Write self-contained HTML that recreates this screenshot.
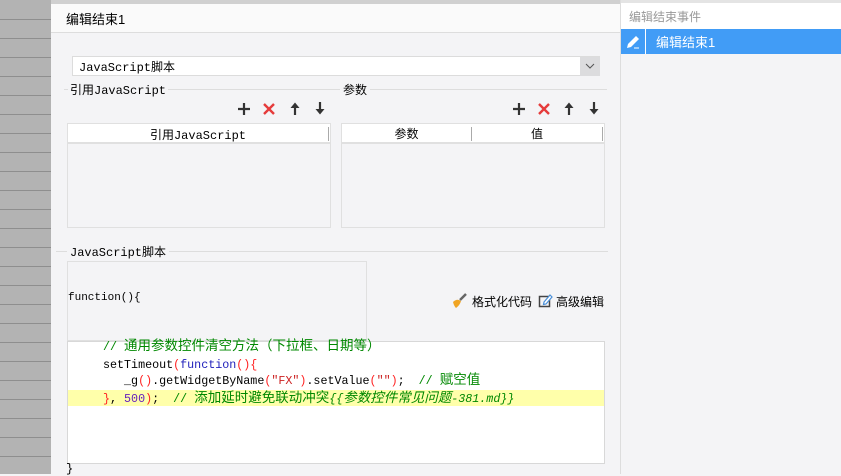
<!DOCTYPE html>
<html><head><meta charset="utf-8"><style>
*{margin:0;padding:0;box-sizing:border-box}
body{width:841px;height:474px;overflow:hidden;position:relative;background:#f4f4f6;font-family:"Liberation Sans","Noto Sans CJK SC",sans-serif;font-size:12px;color:#000}
.a{position:absolute}
.mono{font-family:"Liberation Mono","Noto Sans CJK SC",monospace}
.gl{position:absolute;left:0;width:51px;height:1px;background:#8e8e8e}
.cj{font-size:13.5px}
</style></head><body>
<div class="a" style="left:0;top:0;width:51px;height:474px;background:#b3b3b3"></div>
<div class="gl" style="top:19px"></div><div class="gl" style="top:38px"></div><div class="gl" style="top:57px"></div><div class="gl" style="top:76px"></div><div class="gl" style="top:95px"></div><div class="gl" style="top:114px"></div><div class="gl" style="top:133px"></div><div class="gl" style="top:152px"></div><div class="gl" style="top:171px"></div><div class="gl" style="top:190px"></div><div class="gl" style="top:209px"></div><div class="gl" style="top:228px"></div><div class="gl" style="top:247px"></div><div class="gl" style="top:266px"></div><div class="gl" style="top:285px"></div><div class="gl" style="top:304px"></div><div class="gl" style="top:323px"></div><div class="gl" style="top:342px"></div><div class="gl" style="top:361px"></div><div class="gl" style="top:380px"></div><div class="gl" style="top:399px"></div><div class="gl" style="top:418px"></div><div class="gl" style="top:437px"></div><div class="gl" style="top:456px"></div>
<div class="a" style="left:51px;top:0;width:570px;height:4px;background:#d0d0d0"></div>
<div class="a" style="left:51px;top:4px;width:569px;height:29px;background:#fafafa;border-bottom:1px solid #ddd"></div>
<div class="a" style="left:66px;top:9px;font-size:13px">编辑结束1</div>
<div class="a" style="left:72px;top:56px;width:528px;height:20px;background:#fff;border:1px solid #dcdcdc"></div>
<div class="a" style="left:580px;top:57px;width:20px;height:19px;background:#dcdcde"></div>
<svg class="a" style="left:585px;top:62px" width="10" height="8"><path d="M1 2 L5 6 L9 2" stroke="#555" fill="none"/></svg>
<div class="a mono" style="left:79px;top:58px">JavaScript脚本</div>
<div class="a" style="left:64px;top:89px;width:270px;height:1px;background:#ddd"></div>
<div class="a mono" style="left:68px;top:81px;background:#f4f4f6;padding:0 2px">引用JavaScript</div>
<div class="a" style="left:334px;top:89px;width:273px;height:1px;background:#ddd"></div>
<div class="a" style="left:340px;top:81px;background:#f4f4f6;padding:0 3px">参数</div>
<svg class="a" style="left:237px;top:102px" width="14" height="14"><path d="M7 1V13M1 7H13" stroke="#333" stroke-width="2.2"/></svg>
<svg class="a" style="left:262px;top:102px" width="14" height="14"><path d="M2 2L12 12M12 2L2 12" stroke="#e53b3b" stroke-width="2.4"/></svg>
<svg class="a" style="left:289px;top:101px" width="12" height="15"><path d="M6 14V3" stroke="#333" stroke-width="2.2"/><path d="M1.5 7 L6 1.5 L10.5 7Z" fill="#333"/></svg>
<svg class="a" style="left:314px;top:101px" width="12" height="15"><path d="M6 1V12" stroke="#333" stroke-width="2.2"/><path d="M1.5 8 L6 13.5 L10.5 8Z" fill="#333"/></svg>
<svg class="a" style="left:512px;top:102px" width="14" height="14"><path d="M7 1V13M1 7H13" stroke="#333" stroke-width="2.2"/></svg>
<svg class="a" style="left:537px;top:102px" width="14" height="14"><path d="M2 2L12 12M12 2L2 12" stroke="#e53b3b" stroke-width="2.4"/></svg>
<svg class="a" style="left:563px;top:101px" width="12" height="15"><path d="M6 14V3" stroke="#333" stroke-width="2.2"/><path d="M1.5 7 L6 1.5 L10.5 7Z" fill="#333"/></svg>
<svg class="a" style="left:588px;top:101px" width="12" height="15"><path d="M6 1V12" stroke="#333" stroke-width="2.2"/><path d="M1.5 8 L6 13.5 L10.5 8Z" fill="#333"/></svg>
<div class="a" style="left:67px;top:123px;width:264px;height:105px;border:1px solid #e0e0e0;background:#f4f4f6"></div>
<div class="a" style="left:68px;top:124px;width:262px;height:20px;background:#fff;border-bottom:2px solid #e0e0e0"></div>
<div class="a" style="left:328px;top:127px;width:1px;height:14px;background:#aaa"></div>
<div class="a mono" style="left:68px;top:126px;width:260px;text-align:center">引用JavaScript</div>
<div class="a" style="left:341px;top:123px;width:264px;height:105px;border:1px solid #e0e0e0;background:#f4f4f6"></div>
<div class="a" style="left:342px;top:124px;width:262px;height:20px;background:#fff;border-bottom:2px solid #e0e0e0"></div>
<div class="a" style="left:471px;top:127px;width:1px;height:14px;background:#aaa"></div>
<div class="a" style="left:602px;top:127px;width:1px;height:14px;background:#aaa"></div>
<div class="a" style="left:342px;top:125px;width:129px;text-align:center">参数</div>
<div class="a" style="left:472px;top:125px;width:130px;text-align:center">值</div>
<div class="a" style="left:56px;top:251px;width:552px;height:1px;background:#ddd"></div>
<div class="a mono" style="left:67px;top:243px;background:#f4f4f6;padding:0 3px">JavaScript脚本</div>
<div class="a" style="left:67px;top:261px;width:300px;height:80px;border:1px solid #e0e0e0"></div>
<div class="a mono" style="left:68px;top:292px;font-size:11px">function(){</div>
<svg class="a" style="left:451px;top:293px" width="17" height="16"><path d="M15 1 L9 7" stroke="#666" stroke-width="2.5"/><path d="M2 9 Q6 5 10 8 Q9 12 5 15 Q3 13 2 9Z" fill="#f0a524"/></svg>
<div class="a" style="left:472px;top:293px;font-size:12px">格式化代码</div>
<svg class="a" style="left:538px;top:293px" width="15" height="15"><rect x="1.5" y="3.5" width="10" height="10" fill="none" stroke="#444" stroke-width="1.5"/><path d="M6 9 L12 2 L14 4 L8 11 L5.5 11.5Z" fill="#fff" stroke="#4a8fd8" stroke-width="1.2"/></svg>
<div class="a" style="left:556px;top:293px;font-size:12px">高级编辑</div>
<div class="a" style="left:67px;top:341px;width:538px;height:123px;background:#fff;border:1px solid #d8d8d8"></div>
<div class="a" style="left:68px;top:390px;width:536px;height:16px;background:#ffffaa"></div>
<div class="a mono" style="left:103px;top:339px;font-size:11.7px;line-height:16.5px;white-space:pre;color:#000"><span style="color:#080">// <span class="cj">通用参数控件清空方法（下拉框、日期等）</span></span>
setTimeout<span style="color:#f22">(</span><span style="color:#22b">function</span><span style="color:#f22">(){</span>
   _g<span style="color:#f22">()</span>.getWidgetByName<span style="color:#f22">(</span><span style="color:#c22">"FX"</span><span style="color:#f22">)</span>.setValue<span style="color:#f22">(</span><span style="color:#c22">""</span><span style="color:#f22">)</span>;  <span style="color:#080">// <span class="cj">赋空值</span></span>
<span style="color:#f22">}</span>, <span style="color:#62b">500</span><span style="color:#f22">)</span>;  <span style="color:#080">// <span class="cj">添加延时避免联动冲突</span><i>{{<span class="cj">参数控件常见问题</span>-381.md}}</i></span></div>
<div class="a mono" style="left:66px;top:462px">}</div>
<div class="a" style="left:620px;top:0;width:1px;height:474px;background:#ddd"></div>
<div class="a" style="left:621px;top:0;width:220px;height:3px;background:#e4e4e4"></div>
<div class="a" style="left:621px;top:3px;width:220px;height:26px;background:#fff"></div>
<div class="a" style="left:629px;top:8px;color:#999">编辑结束事件</div>
<div class="a" style="left:621px;top:29px;width:220px;height:25px;background:#419cf6"></div>
<div class="a" style="left:645px;top:29px;width:1px;height:25px;background:#fff"></div>
<svg class="a" style="left:624px;top:33px" width="18" height="16"><path d="M4 11 L12 3 L15 6 L7 14 L3 15Z" fill="#fff"/><path d="M10 15 H15" stroke="#fff"/></svg>
<div class="a" style="left:656px;top:32px;color:#fff;font-size:13px">编辑结束1</div>
</body></html>
